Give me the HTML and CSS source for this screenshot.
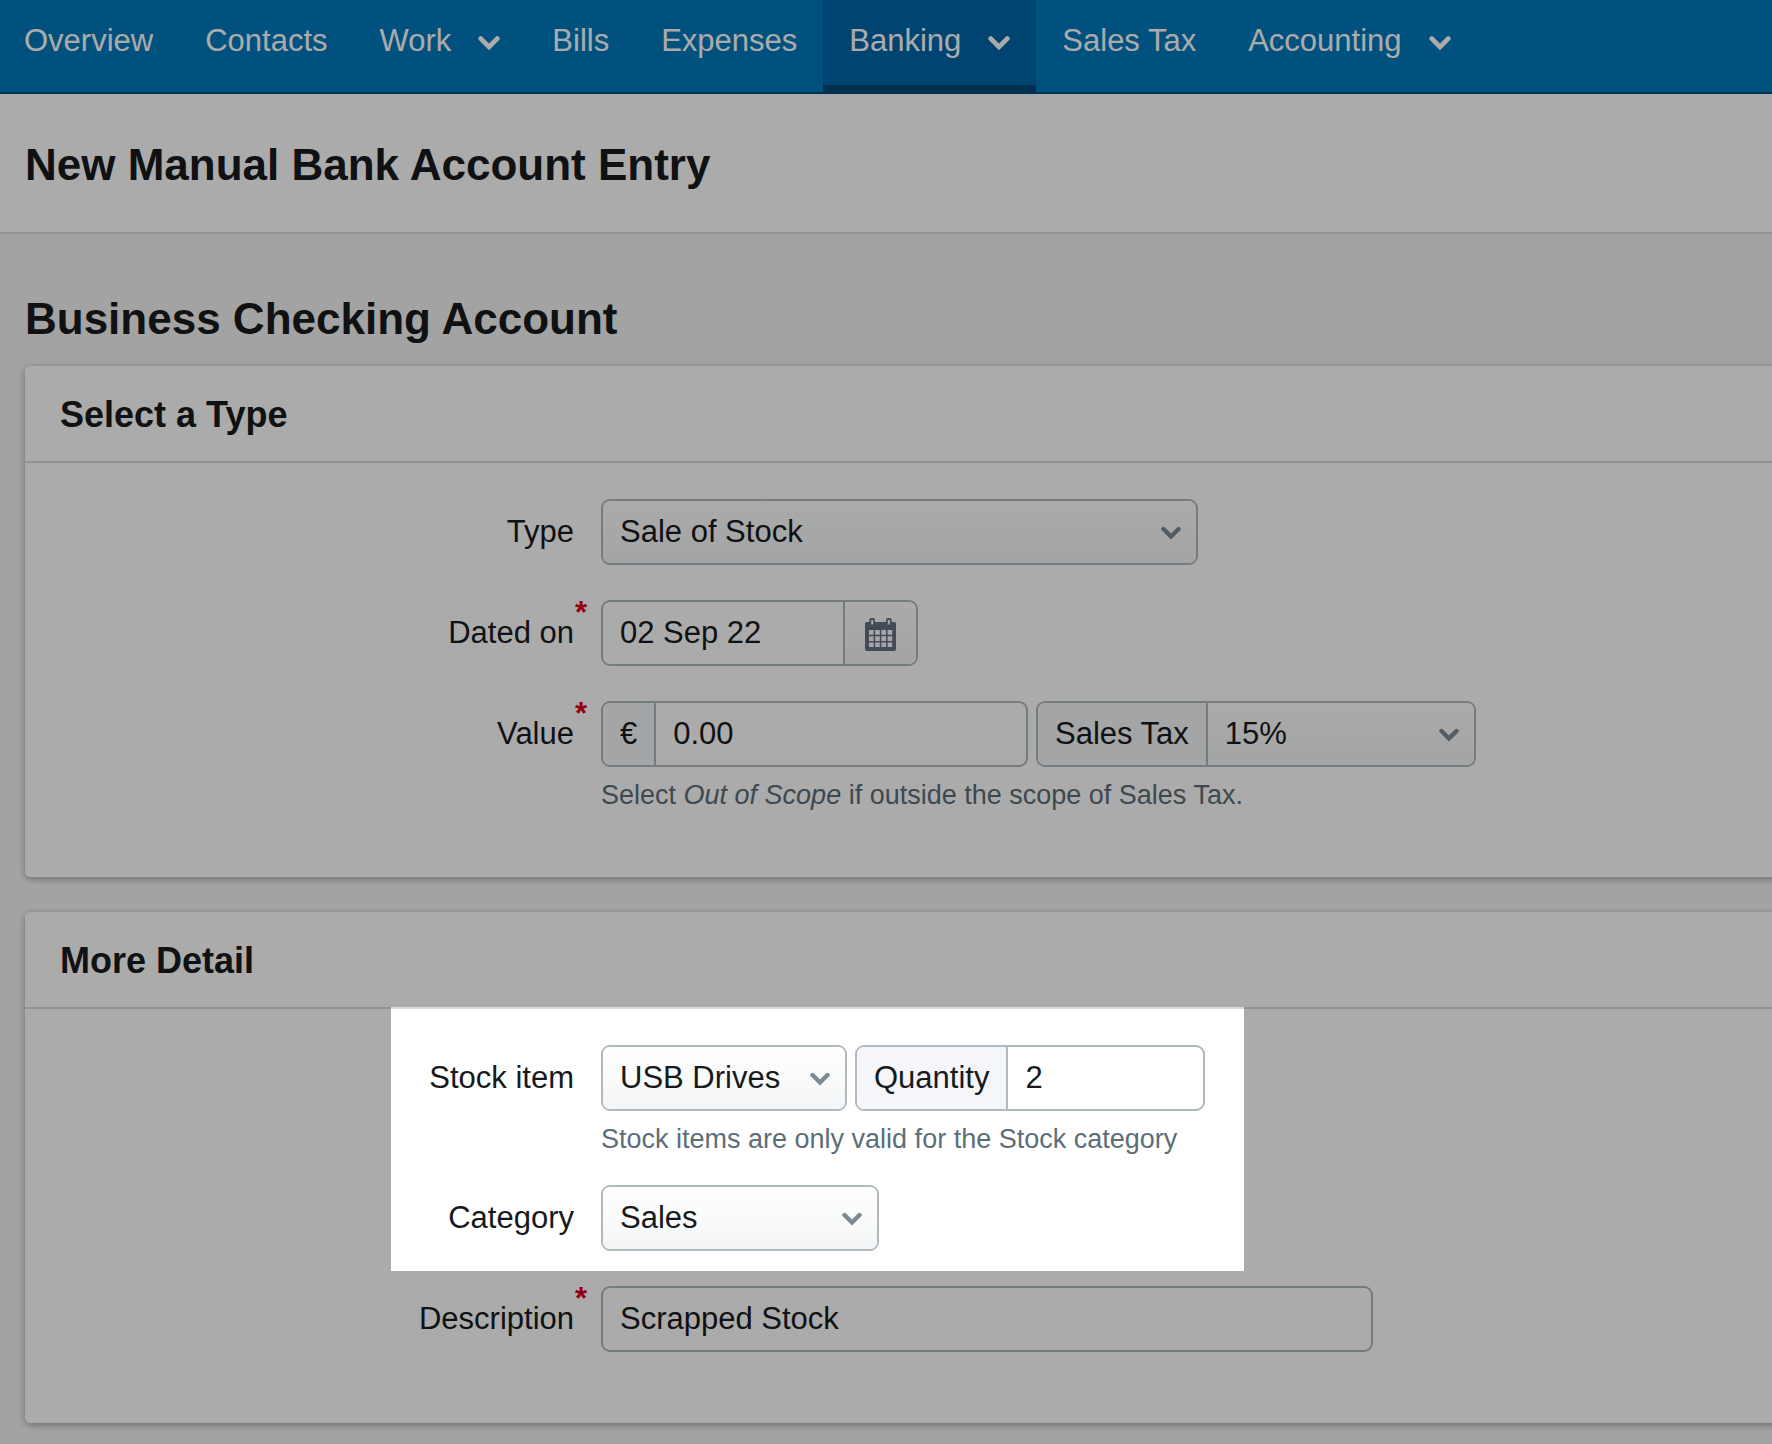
FILE: index.html
```html
<!DOCTYPE html>
<html lang="en">
<head>
<meta charset="utf-8">
<title>New Manual Bank Account Entry</title>
<meta name="viewport" content="width=device-width, initial-scale=1">
<link rel="stylesheet" href="styles.css">
</head>
<body>
<svg class="sprite" aria-hidden="true">
  <symbol id="chevron" viewBox="0 0 20 14"><path d="M2.5 3 10 10.5 17.5 3" fill="none" stroke="currentColor" stroke-width="4.4" stroke-linecap="round" stroke-linejoin="miter"/></symbol>
</svg>
<div class="page">
  <nav class="nav" aria-label="Main">
    <a class="nav-link" href="#">Overview</a>
    <a class="nav-link" href="#">Contacts</a>
    <a class="nav-link" href="#">Work <svg class="nav-chevron"><use href="#chevron"/></svg></a>
    <a class="nav-link" href="#">Bills</a>
    <a class="nav-link" href="#">Expenses</a>
    <a class="nav-link active" href="#" aria-current="page">Banking <svg class="nav-chevron"><use href="#chevron"/></svg></a>
    <a class="nav-link" href="#">Sales Tax</a>
    <a class="nav-link" href="#">Accounting <svg class="nav-chevron"><use href="#chevron"/></svg></a>
  </nav>
  <header class="page-header"><h1>New Manual Bank Account Entry</h1></header>
  <main class="main">
    <h2 class="account">Business Checking Account</h2>
    <form class="cards">
      <section class="card">
        <h3 class="card-title">Select a Type</h3>
        <div class="card-body">
          <div class="row">
            <label class="label" for="type">Type</label>
            <div class="field">
              <div class="group w-type">
                <div class="select"><select id="type"><option>Sale of Stock</option></select><svg class="chevron"><use href="#chevron"/></svg></div>
              </div>
            </div>
          </div>
          <div class="row">
            <label class="label" for="date"><span class="required">Dated on</span></label>
            <div class="field">
              <div class="group w-date">
                <input id="date" type="text" value="02 Sep 22">
                <button class="date-button" type="button" aria-label="Choose date">
                  <svg width="31" height="33" viewBox="0 0 31 33">
                    <path fill="currentColor" fill-rule="evenodd" d="M1.500 4H4.300V2Q4.300 0 6.300 0H8Q10 0 10 2V4H21V2Q21 0 23 0H24.700Q26.700 0 26.700 2V4H29.500Q31 4 31 5.500V31Q31 33 29 33H2Q0 33 0 31V5.500Q0 4 1.500 4ZM6.200 2V6.500H8.200V2ZM22.800 2V6.500H24.800V2ZM4 12V16.700H8.600V12ZM10.200 12V16.700H14.800V12ZM16.400 12V16.700H21V12ZM22.600 12V16.700H27.200V12ZM4 18.200V22.900H8.600V18.200ZM10.200 18.200V22.900H14.800V18.200ZM16.400 18.200V22.900H21V18.200ZM22.600 18.200V22.900H27.200V18.200ZM4 24.400V29.100H8.600V24.400ZM10.200 24.400V29.100H14.800V24.400ZM16.400 24.400V29.100H21V24.400ZM22.600 24.400V29.100H27.200V24.400Z"/>
                  </svg>
                </button>
              </div>
            </div>
          </div>
          <div class="row">
            <label class="label" for="value"><span class="required">Value</span></label>
            <div class="field">
              <div class="group w-value">
                <span class="addon">€</span>
                <input id="value" type="text" value="0.00">
              </div>
              <div class="group w-tax">
                <label class="addon" for="tax">Sales Tax</label>
                <div class="select"><select id="tax"><option>15%</option></select><svg class="chevron"><use href="#chevron"/></svg></div>
              </div>
              <p class="hint">Select <em>Out of Scope</em> if outside the scope of Sales Tax.</p>
            </div>
          </div>
        </div>
      </section>
      <section class="card">
        <h3 class="card-title">More Detail</h3>
        <div class="card-body">
          <div class="spotlight"></div>
          <div class="row">
            <label class="label" for="stock">Stock item</label>
            <div class="field">
              <div class="group w-stock">
                <div class="select"><select id="stock"><option>USB Drives</option></select><svg class="chevron"><use href="#chevron"/></svg></div>
              </div>
              <div class="group w-quantity">
                <label class="addon" for="quantity">Quantity</label>
                <input id="quantity" type="text" value="2">
              </div>
              <p class="hint">Stock items are only valid for the Stock category</p>
            </div>
          </div>
          <div class="row">
            <label class="label" for="category">Category</label>
            <div class="field">
              <div class="group w-category">
                <div class="select"><select id="category"><option>Sales</option></select><svg class="chevron"><use href="#chevron"/></svg></div>
              </div>
            </div>
          </div>
          <div class="row">
            <label class="label" for="description"><span class="required">Description</span></label>
            <div class="field">
              <div class="group w-description">
                <input id="description" type="text" value="Scrapped Stock">
              </div>
            </div>
          </div>
        </div>
      </section>
    </form>
  </main>
</div>
</body>
</html>
```
FILE: styles.css
```css
:root {
  --ink: #171a1c;
  --line: #d5dbe0;
  --control-line: #afb9be;
  --addon: #f4f6f9;
}

* { box-sizing: border-box; }

body {
  margin: 0;
  background: #f4f4f4;
  color: var(--ink);
  font: 31px/36px "Liberation Sans", Arial, Helvetica, sans-serif;
}

h1, h2, h3, p { margin: 0; }

.sprite { display: none; }

.page {
  min-height: 100vh;
  overflow: hidden;
}

/* Navigation */
.nav {
  display: flex;
  background: #0079bb;
  border-bottom: 2px solid #00497a;
}

.nav-link {
  display: flex;
  align-items: center;
  gap: 27px;
  padding: 23px 26px 26px;
  border-bottom: 7px solid transparent;
  color: #fff;
  text-decoration: none;
  white-space: nowrap;
}

.nav-link:first-child { padding-left: 24px; }

.nav-link.active {
  background: #0066a9;
  border-bottom-color: #00497a;
}

.nav-chevron {
  width: 22px;
  height: 16px;
  margin-top: 4px;
}

/* Headings */
.page-header {
  padding: 47px 25px 43px;
  background: #fff;
  border-bottom: 2px solid var(--line);
}

h1, .account {
  font-size: 44px;
  line-height: 48px;
  font-weight: bold;
}

.main { padding: 61px 0 20px 25px; }

.account { margin-bottom: 23px; }

/* Cards run off the right edge of the window */
.cards {
  display: flex;
  flex-direction: column;
  gap: 35px;
  margin-right: -20px;
}

.card {
  background: #fff;
  border-radius: 5px;
  box-shadow: 0 2px 7px rgba(40, 45, 45, .4);
}

.card-title {
  padding: 29px 35px 26px;
  border-bottom: 2px solid var(--line);
  font-size: 36px;
  line-height: 40px;
}

.card-body {
  position: relative;
  display: flex;
  flex-direction: column;
  gap: 35px;
  padding: 36px 0 71px;
}

/* Guided highlight: dims everything around the stock fields */
.spotlight {
  position: absolute;
  top: -2px;
  left: 366px;
  z-index: 1;
  width: 853px;
  height: 264px;
  box-shadow: 0 0 0 9999px rgba(0, 0, 0, .33);
  pointer-events: none;
}

/* Form rows */
.row {
  display: grid;
  grid-template-columns: 549px 1fr;
  column-gap: 27px;
}

.label {
  text-align: right;
  line-height: 66px;
}

.required { position: relative; }

.required::after {
  content: "*";
  position: absolute;
  top: -20px;
  left: 100%;
  padding-left: 1px;
  color: #dc0016;
  font-weight: bold;
  line-height: 36px;
}

.field {
  display: flex;
  flex-wrap: wrap;
  column-gap: 8px;
}

.group {
  display: flex;
  height: 66px;
  overflow: hidden;
  border: 2px solid var(--control-line);
  border-radius: 9px;
  background: #fff;
}

.w-type { width: 597px; }
.w-date { width: 317px; }
.w-value { width: 427px; }
.w-tax { width: 440px; }
.w-stock { width: 246px; }
.w-quantity { width: 350px; }
.w-category { width: 278px; }
.w-description { width: 772px; }

.addon {
  padding: 0 17px;
  background: var(--addon);
  border-right: 2px solid var(--control-line);
  line-height: 62px;
  white-space: nowrap;
}

input, select {
  flex: 1;
  width: 100%;
  min-width: 0;
  margin: 0;
  padding: 0 17px;
  border: 0;
  border-radius: 0;
  outline: 0;
  background: none;
  color: inherit;
  font: inherit;
}

.select {
  display: grid;
  flex: 1;
  align-items: center;
  background: linear-gradient(#fff, #f4f5f6);
}

.select > * { grid-area: 1 / 1; }

select {
  height: 62px;
  appearance: none;
}

.chevron {
  justify-self: end;
  width: 20px;
  height: 14px;
  margin: 2px 15px 0 0;
  color: #7b8a94;
  pointer-events: none;
}

.date-button {
  display: grid;
  place-items: center;
  width: 73px;
  padding: 2px 0 0;
  border: 0;
  border-left: 2px solid var(--control-line);
  background: linear-gradient(#fff, #f4f5f6);
  color: #647080;
}

.hint {
  width: 100%;
  margin-top: 15px;
  color: #5c6e78;
  font-size: 27px;
  line-height: 26px;
  margin-bottom: -2px;
}
```
